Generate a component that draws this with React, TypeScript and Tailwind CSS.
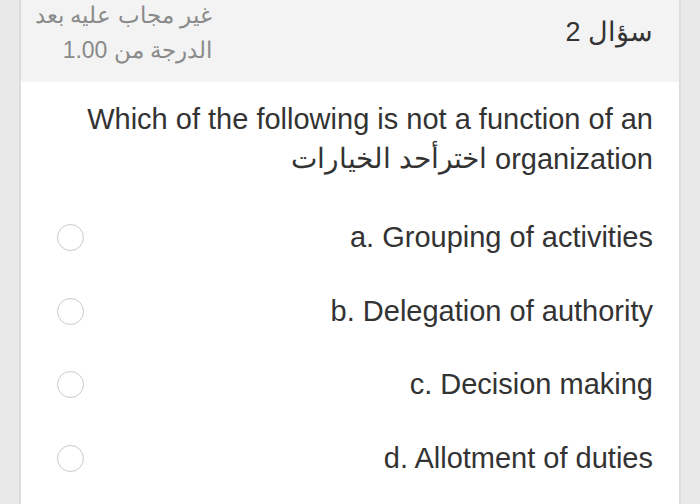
export default function App() {
  const options = [
    "a. Grouping of activities",
    "b. Delegation of authority",
    "c. Decision making",
    "d. Allotment of duties",
  ];
  return (
    <div
      className="w-[700px] h-[504px] overflow-hidden bg-[#e9e9e9] px-[19px]"
      style={{ fontFamily: '"Liberation Sans", "Noto Sans", sans-serif' }}
    >
      <div className="h-full border-x-2 border-[#dcdcdc] bg-white">
        <div dir="rtl" className="flex h-[82px] items-start justify-between bg-[#f3f3f3] pr-[26px] pl-[14px]">
          <div className="mt-[15px] whitespace-nowrap text-[27px] leading-[34px] text-[#333]">سؤال 2</div>
          <div className="whitespace-nowrap text-right text-[23px] leading-[35px] text-[#8a8a8a] -mt-[2px]">
            <div>غير مجاب عليه بعد</div>
            <div>الدرجة من 1.00</div>
          </div>
        </div>
        <div className="flex flex-col items-end pt-[17px] pr-[26px] pl-[40px] text-[29px] leading-[40px] text-[#333]">
          <div className="h-[40px]">Which of the following is not a function of an</div>
          <div dir="rtl" className="flex h-[40px] items-center gap-[8px]">
            <span dir="ltr" className="leading-[34px]">organization</span>
            <span className="text-[28px] leading-[30px]">اخترأحد الخيارات</span>
          </div>
        </div>
        <div className="mt-[22px] flex flex-col">
          {options.map((o) => (
            <div key={o} className="flex h-[73.5px] items-center justify-between pl-[36px] pr-[26px]">
              <div className="h-[27px] w-[27px] rounded-full border-[1.5px] border-[#c9c9c9]" />
              <div className="text-[29px] text-[#333]">{o}</div>
            </div>
          ))}
        </div>
      </div>
    </div>
  );
}
